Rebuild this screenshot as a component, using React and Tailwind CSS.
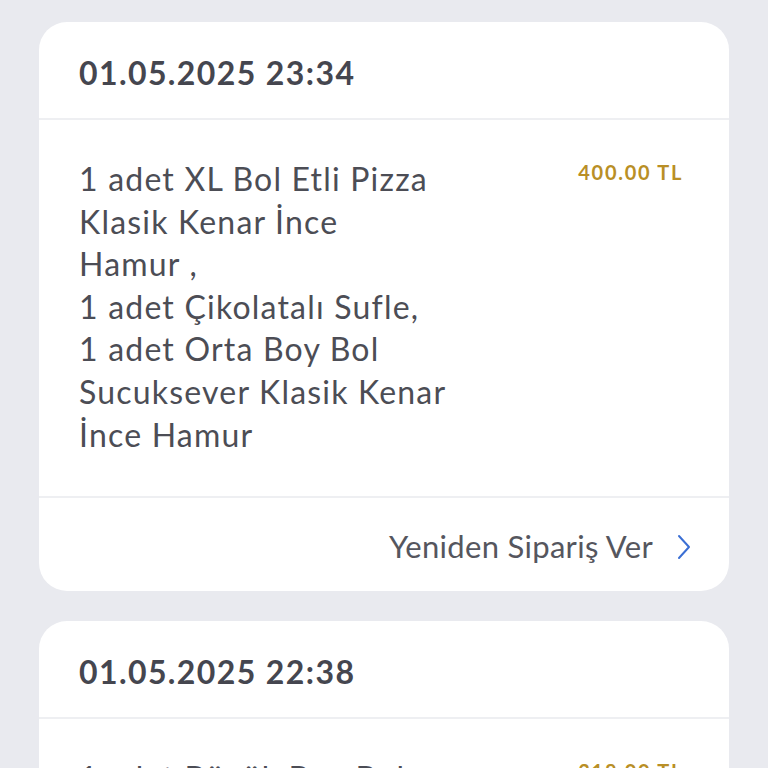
const orders = [
  {
    date: '01.05.2025 23:34',
    price: '400.00 TL',
    lines: [
      '1 adet XL Bol Etli Pizza',
      'Klasik Kenar İnce',
      'Hamur ,',
      '1 adet Çikolatalı Sufle,',
      '1 adet Orta Boy Bol',
      'Sucuksever Klasik Kenar',
      'İnce Hamur',
    ],
  },
  {
    date: '01.05.2025 22:38',
    price: '318.00 TL',
    lines: ['1 adet Büyük Boy Bol', 'Sucuksever Klasik Kenar', 'İnce Hamur'],
  },
];

function OrderCard({ order }) {
  return (
    <div className="shrink-0 bg-white rounded-[28px] overflow-hidden">
      <div className="h-[98px] flex items-center px-[40px] pt-[6px] border-b-2 border-[#eeeff2]">
        <span className="text-[32px] font-bold text-[#45464f] tracking-[1.4px]">{order.date}</span>
      </div>
      <div className="flex justify-between px-[40px] pt-[38px] pb-[40px] border-b-2 border-[#eeeff2]">
        <div className="text-[32px] leading-[42.6px] text-[#4c4d55] tracking-[1.2px]">
          {order.lines.map((l, i) => (
            <div key={i}>{l}</div>
          ))}
        </div>
        <div className="text-[20px] font-bold text-[#b98f26] pr-[6px] -mt-[1px] tracking-[1.7px]">{order.price}</div>
      </div>
      <div className="h-[93px] flex items-center justify-end pr-[38px] pt-[4px]">
        <span className="text-[31px] text-[#55565e] mr-[24px] tracking-[0.3px]">Yeniden Sipariş Ver</span>
        <svg width="14" height="26" viewBox="0 0 14 26" fill="none">
          <path d="M2 2 L12 13 L2 24" stroke="#3b6fd4" strokeWidth="2" strokeLinecap="round" strokeLinejoin="round" />
        </svg>
      </div>
    </div>
  );
}

export default function App() {
  return (
    <div className="w-[768px] h-[768px] overflow-hidden bg-[#e9eaef] px-[39px] pt-[22px] flex flex-col gap-[30px]" style={{ fontFamily: 'Lato, "Noto Sans", sans-serif' }}>
      {orders.map((o, i) => (
        <OrderCard key={i} order={o} />
      ))}
    </div>
  );
}
